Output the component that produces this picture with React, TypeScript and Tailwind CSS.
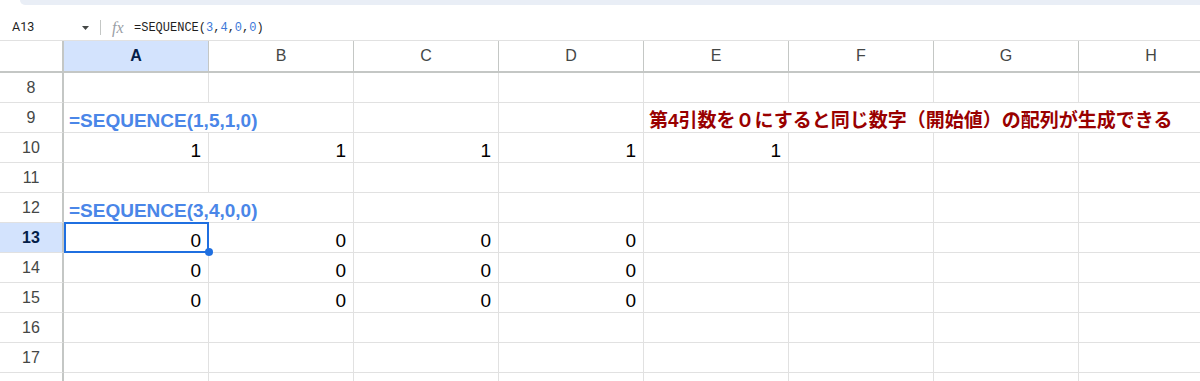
import React from 'react'

const COLS = ['A', 'B', 'C', 'D', 'E', 'F', 'G', 'H']

type Cell = { text: string; kind: 'num' | 'formula' | 'note' } | null

type RowData = {
  n: number
  cells: Cell[]
  open?: number[] // columns whose right gridline is hidden by overflowing text
}

const num = (t: string): Cell => ({ text: t, kind: 'num' })

const rows: RowData[] = [
  { n: 8, cells: [] },
  {
    n: 9,
    cells: [
      { text: '=SEQUENCE(1,5,1,0)', kind: 'formula' },
      null,
      null,
      null,
      { text: '第4引数を０にすると同じ数字（開始値）の配列が生成できる', kind: 'note' },
    ],
    open: [0, 4, 5, 6],
  },
  { n: 10, cells: [num('1'), num('1'), num('1'), num('1'), num('1')] },
  { n: 11, cells: [] },
  { n: 12, cells: [{ text: '=SEQUENCE(3,4,0,0)', kind: 'formula' }], open: [0] },
  { n: 13, cells: [num('0'), num('0'), num('0'), num('0')] },
  { n: 14, cells: [num('0'), num('0'), num('0'), num('0')] },
  { n: 15, cells: [num('0'), num('0'), num('0'), num('0')] },
  { n: 16, cells: [] },
  { n: 17, cells: [] },
  { n: 18, cells: [] },
]

function FormulaBar() {
  return (
    <div className="h-[40px]">
      <div className="h-[5px] ml-[20px] bg-[#e9eef6] rounded-bl-[10px]" />
      <div className="h-[35px] pt-[10px] flex items-center">
        <div className="w-[82px] pl-[12px] text-[12.5px] text-[#1f1f1f] font-['Roboto',sans-serif]">A13</div>
        <svg width="7" height="4" viewBox="0 0 7 4">
          <path d="M0 0h7L3.5 4z" fill="#444746" />
        </svg>
        <div className="ml-[11px] w-px h-[15px] bg-[#c4c7c5]" />
        <div className="ml-[11px] w-[22px] text-[16px] italic text-[#9aa0a6] font-['Liberation_Serif',serif] leading-none">
          fx
        </div>
        <div className="text-[12px] text-[#1f1f1f] font-['Liberation_Mono',monospace]">
          =SEQUENCE(<span className="text-[#3d78d8]">3</span>,<span className="text-[#3d78d8]">4</span>,
          <span className="text-[#3d78d8]">0</span>,<span className="text-[#3d78d8]">0</span>)
        </div>
      </div>
    </div>
  )
}

function HeaderRow() {
  return (
    <div className="flex h-[33px] border-t border-t-[#e1e1e1] border-b-2 border-b-[#c4c7c5]">
      <div className="w-[64px] shrink-0 border-r-2 border-r-[#c4c7c5]" />
      {COLS.map((c) => (
        <div
          key={c}
          className={`w-[145px] shrink-0 border-r border-r-[#c4c7c5] flex items-center justify-center text-[16px] ${
            c === 'A' ? 'bg-[#d3e3fd] font-bold text-[#041e49]' : 'text-[#444746]'
          }`}
        >
          {c}
        </div>
      ))}
    </div>
  )
}

function Row({ row }: { row: RowData }) {
  const active = row.n === 13
  return (
    <div className="flex h-[30px]">
      <div
        className={`w-[64px] shrink-0 border-r-2 border-r-[#c4c7c5] border-b border-b-[#e1e1e1] flex items-center justify-center text-[16px] ${
          active ? 'bg-[#d3e3fd] font-bold text-[#041e49]' : 'text-[#444746]'
        }`}
      >
        {row.n}
      </div>
      {COLS.map((c, i) => {
        const cell = row.cells[i]
        const open = row.open?.includes(i)
        const selected = active && i === 0
        return (
          <div
            key={c}
            className={`relative w-[145px] shrink-0 border-b border-b-[#e1e1e1] flex items-end text-[19px] ${
              open ? '' : 'border-r border-r-[#e1e1e1]'
            } ${cell?.kind === 'num' ? 'justify-end pr-[7px]' : 'justify-start pl-[5px]'}`}
          >
            {cell && (
              <span
                className={`relative z-10 whitespace-nowrap leading-[22px] ${
                  cell.kind === 'formula'
                    ? 'font-bold text-[#4a86e8]'
                    : cell.kind === 'note'
                    ? 'font-bold text-[#990000]'
                    : 'text-black'
                }`}
              >
                {cell.text}
              </span>
            )}
            {selected && (
              <>
                <div className="absolute -top-px left-0 -right-px -bottom-px border-2 border-[#1f6fe0] z-20" />
                <div className="absolute -right-[5px] -bottom-[4px] w-[8px] h-[8px] rounded-full bg-[#1f6fe0] z-30" />
              </>
            )}
          </div>
        )
      })}
    </div>
  )
}

export default function App() {
  return (
    <div className="w-[1200px] h-[381px] overflow-hidden bg-white font-['Liberation_Sans','Noto_Sans_CJK_JP',sans-serif]">
      <FormulaBar />
      <HeaderRow />
      {rows.map((r) => (
        <Row key={r.n} row={r} />
      ))}
    </div>
  )
}
